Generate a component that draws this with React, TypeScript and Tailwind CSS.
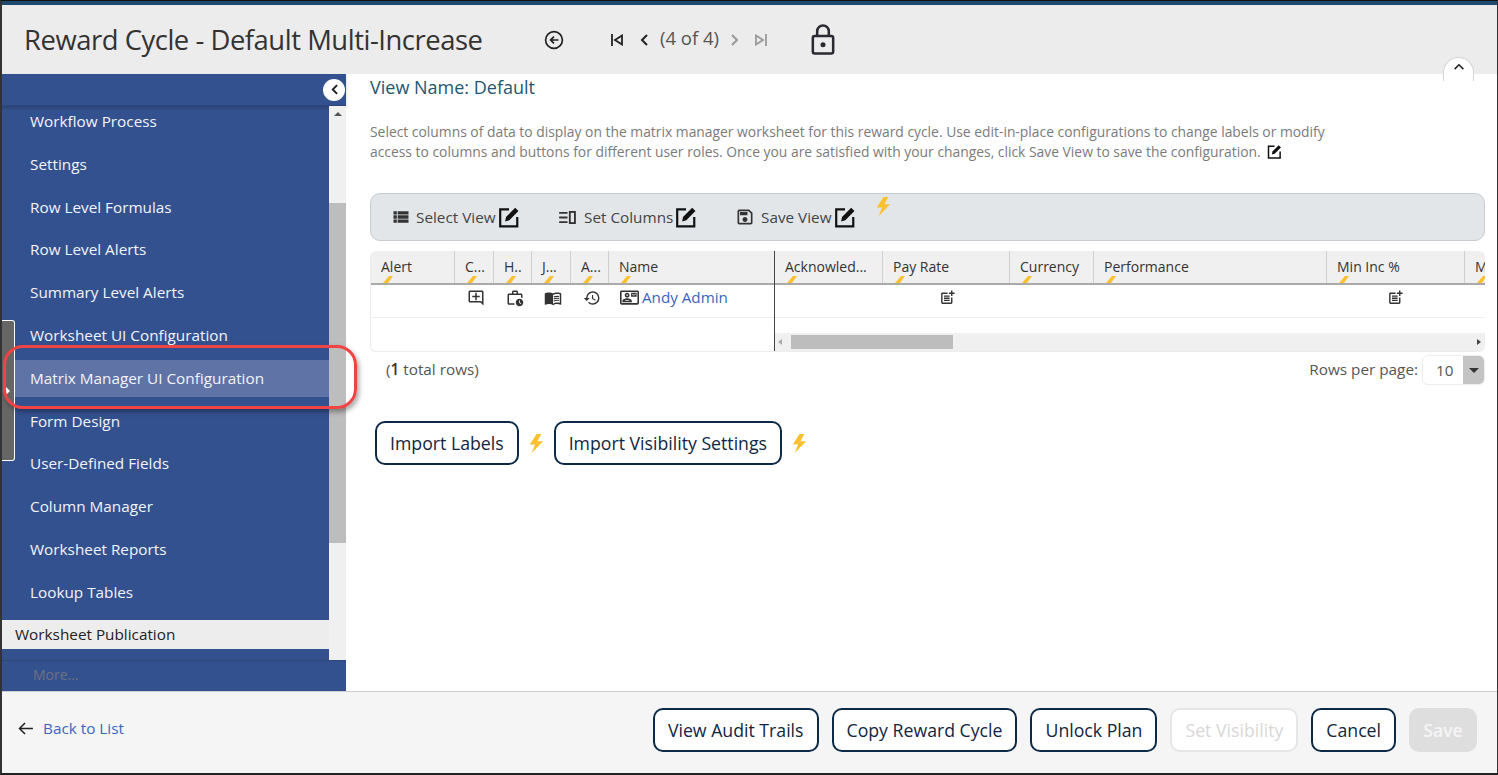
import {
  MdHistory,
  MdMenuBook,
  MdOutlineAddComment,
  MdOutlineContactMail,
  MdOutlinePostAdd,
  MdOutlineSave,
  MdOutlineWorkHistory,
  MdViewList,
} from 'react-icons/md';

const navItems = [
  'Workflow Process',
  'Settings',
  'Row Level Formulas',
  'Row Level Alerts',
  'Summary Level Alerts',
  'Worksheet UI Configuration',
  'Matrix Manager UI Configuration',
  'Form Design',
  'User-Defined Fields',
  'Column Manager',
  'Worksheet Reports',
  'Lookup Tables',
];

const Bolt = ({ className = '' }: { className?: string }) => (
  <svg viewBox="0 0 16 20" className={className}>
    <polygon points="8,0 1,11 6.5,11 3,20 15,7.5 9,7.5 13,0" fill="#fbc02d" />
  </svg>
);

const EditIcon = ({ className = '' }: { className?: string }) => (
  <svg viewBox="0 0 20 20" className={className} fill="none">
    <path d="M10 3H2v15.5h15.5V10" stroke="#111" strokeWidth="2" />
    <path d="M6.5 14l.8-4L15.6 1.6l3 3L10.3 13z" fill="#111" />
  </svg>
);

const ColumnsIcon = () => (
  <svg viewBox="0 0 18 14" className="ml-[1px] h-[13px] w-[17px]" fill="none" stroke="#333">
    <path d="M0 2h9M0 7h9M0 12h9" strokeWidth="2" />
    <rect x="11.5" y="1" width="5.5" height="12" strokeWidth="2" />
  </svg>
);

const HeaderCell = ({ label, width }: { label: string; width: string }) => (
  <div className={`relative flex h-full shrink-0 items-center border-r border-[#cfcfcf] pb-[1px] pl-[10px] ${width}`}>
    <span className="whitespace-nowrap">{label}</span>
    <svg viewBox="0 0 10 7" className="absolute bottom-0 left-[12px] h-[7px] w-[10px]">
      <polygon points="6,0 10,0 5,7 0,7" fill="#fbc02d" />
    </svg>
  </div>
);

const ToolbarItem = ({ icon, label, width = '', iconCol = 'w-[25px]' }: { icon: React.ReactNode; label: string; width?: string; iconCol?: string }) => (
  <div className={`flex items-center ${width}`}>
    <span className={`flex shrink-0 items-center ${iconCol}`}>{icon}</span>
    <span className="text-[15.3px] text-[#444]">{label}</span>
    <EditIcon className="ml-[2px] h-[22px] w-[22px]" />
  </div>
);

const OutlineButton = ({ label, disabled = false }: { label: string; disabled?: boolean }) => (
  <div
    className={`flex h-[44px] items-center justify-center rounded-[10px] border-2 bg-white px-[13px] text-[17.7px] font-medium whitespace-nowrap ${
      disabled ? 'border-[#e6e6e6] text-[#d8d8d8]' : 'border-[#0c2a48] text-[#10263f]'
    }`}
  >
    {label}
  </div>
);

export default function App() {
  return (
    <div
      className="relative flex h-[775px] w-[1498px] flex-col overflow-hidden border-t border-r border-b-2 border-l-2 border-t-[#111] border-r-[#333] border-b-[#222] border-l-[#333] bg-white font-['Open_Sans',sans-serif]"
    >
      <div className="h-[4px] shrink-0 bg-[#1f4a70]" />

      {/* header */}
      <header className="flex h-[69px] shrink-0 items-center bg-[#ececec] pl-[22px]">
        <h1 className="w-[520px] shrink-0 text-[27.4px] leading-none font-medium tracking-[-0.45px] text-[#333]">Reward Cycle - Default Multi-Increase</h1>
        <svg viewBox="0 0 20 20" className="h-[20px] w-[20px]" fill="none" stroke="#222" strokeWidth="1.7">
          <circle cx="10" cy="10" r="8.4" />
          <path d="M14.5 10H7M10 6.6L6.6 10l3.4 3.4" />
        </svg>
        <div className="ml-[47px] flex items-center">
          <svg viewBox="0 0 12 12" className="h-[12px] w-[12px]" fill="none" stroke="#222" strokeWidth="1.8">
            <path d="M1 0v12" />
            <path d="M11 1.5L4 6l7 4.5z" />
          </svg>
          <svg viewBox="0 0 8 12" className="ml-[17px] h-[12px] w-[8px]" fill="none" stroke="#222" strokeWidth="2">
            <path d="M7 1L2 6l5 5" />
          </svg>
          <span className="mb-[4px] ml-[12px] text-[18.5px] text-[#555]">(4 of 4)</span>
          <svg viewBox="0 0 8 12" className="ml-[12px] h-[12px] w-[8px]" fill="none" stroke="#999" strokeWidth="2">
            <path d="M1 1l5 5-5 5" />
          </svg>
          <svg viewBox="0 0 12 12" className="ml-[16px] h-[12px] w-[12px]" fill="none" stroke="#999" strokeWidth="1.8">
            <path d="M11 0v12" />
            <path d="M1 1.5L8 6l-7 4.5z" />
          </svg>
        </div>
        <svg viewBox="0 0 24 32" className="ml-[44px] h-[31px] w-[24px]" fill="none" stroke="#2a2a33" strokeWidth="2.6">
          <path d="M6 13V7.5a6 6 0 0 1 12 0V13" />
          <rect x="1.5" y="12.5" width="21" height="18" rx="2" />
          <circle cx="12" cy="21.5" r="2.6" fill="#2a2a33" stroke="none" />
        </svg>
      </header>

      <div className="flex min-h-0 flex-1">
        {/* sidebar */}
        <aside className="flex w-[344px] shrink-0 flex-col bg-[#34518f]">
          <div className="flex h-[32px] shrink-0 items-center justify-end border-b border-[#2d4679] pr-[1px] shadow-[0_2px_3px_rgba(0,0,0,0.2)]">
            <div className="flex h-[22px] w-[22px] items-center justify-center rounded-full bg-white">
              <svg viewBox="0 0 8 12" className="h-[11px] w-[7px]" fill="none" stroke="#222" strokeWidth="2.2">
                <path d="M7 1L2 6l5 5" />
              </svg>
            </div>
          </div>
          <div className="flex min-h-0 flex-1">
            <nav className="min-w-0 flex-1 overflow-hidden">
              <div className="-mt-[6px]">
                {navItems.map((item) => (
                  <div key={item} className="flex h-[42.8px] items-center">
                    <div
                      className={`flex h-[37px] w-full items-center pl-[28px] text-[15.3px] text-[#f2f4f8] ${
                        item === 'Matrix Manager UI Configuration' ? 'bg-[#5f73a6]' : ''
                      }`}
                    >
                      {item}
                    </div>
                  </div>
                ))}
              </div>
              <div className="mt-[6px] flex h-[29px] items-center bg-[#ededed] pl-[13px] text-[15.3px] font-medium text-[#222]">
                Worksheet Publication
              </div>
            </nav>
            <div className="w-[17px] shrink-0 bg-[#f0f0f0]">
              <div className="mx-auto mt-[6px] h-0 w-0 border-x-[4px] border-b-[4px] border-x-transparent border-b-[#555]" />
              <div className="mt-[87px] h-[340px] w-full bg-[#bdbdbd]" />
            </div>
          </div>
          <div className="flex h-[31px] shrink-0 items-center border-t border-[#2d4679] pb-[3px] pl-[31px] text-[14px] text-[#6d7280]">
            More...
          </div>
        </aside>

        {/* main */}
        <main className="min-w-0 flex-1 pr-[12px] pl-[24px]">
          <h2 className="text-[18px] leading-[26px] font-medium text-[#24566f]">View Name: Default</h2>
          <div className="mt-[22px] text-[13.87px] leading-[20px] text-[#7b7b7b]">
            <p>
              Select columns of data to display on the matrix manager worksheet for this reward cycle. Use edit-in-place configurations to change labels or modify
              <br />
              access to columns and buttons for different user roles. Once you are satisfied with your changes, click Save View to save the configuration.
              <EditIcon className="ml-[6px] inline-block h-[15px] w-[15px] align-[-2px]" />
            </p>
          </div>

          {/* toolbar */}
          <div className="mt-[31px] flex h-[48px] items-center rounded-[10px] border border-[#c8cbcf] bg-[#e3e6e9] pl-[20px]">
            <ToolbarItem icon={<MdViewList className="h-[20px] w-[20px] text-[#333]" />} label="Select View" width="w-[167px]" />
            <ToolbarItem icon={<ColumnsIcon />} label="Set Columns" width="w-[177px]" iconCol="w-[26px]" />
            <ToolbarItem icon={<MdOutlineSave className="h-[20px] w-[20px] text-[#333]" />} label="Save View" iconCol="w-[26px]" />
            <Bolt className="mb-[22px] ml-[19px] h-[19px] w-[17px]" />
          </div>

          {/* grid */}
          <div className="mt-[10px] flex h-[101px] overflow-hidden rounded-[6px] border-b border-l border-[#ececec] text-[14px] text-[#333]">
            <div className="w-[404px] shrink-0 border-r border-[#444]">
              <div className="flex h-[34px] border-b-2 border-[#aaa] bg-[#f0f0f0]">
                <HeaderCell label="Alert" width="w-[84px]" />
                <HeaderCell label="C..." width="w-[39px]" />
                <HeaderCell label="H.." width="w-[38px]" />
                <HeaderCell label="J..." width="w-[39px]" />
                <HeaderCell label="A..." width="w-[38px]" />
                <HeaderCell label="Name" width="flex-1 border-r-0" />
              </div>
              <div className="flex h-[33px] items-center border-b border-[#eee] pb-[7px] text-[#333]">
                <div className="w-[84px]" />
                <div className="flex w-[39px] justify-center pl-[3px]"><MdOutlineAddComment className="h-[18px] w-[18px]" /></div>
                <div className="flex w-[38px] justify-center pl-[4px]"><MdOutlineWorkHistory className="h-[18px] w-[18px]" /></div>
                <div className="flex w-[39px] justify-center pl-[3px]"><MdMenuBook className="h-[18px] w-[18px]" /></div>
                <div className="flex w-[38px] justify-center pl-[3px]"><MdHistory className="h-[18px] w-[18px]" /></div>
                <div className="flex flex-1 items-center pl-[11px]">
                  <MdOutlineContactMail className="mr-[3px] h-[19px] w-[19px]" />
                  <span className="text-[15.2px] text-[#3a66bd]">Andy Admin</span>
                </div>
              </div>
            </div>
            <div className="flex min-w-0 flex-1 flex-col overflow-hidden">
              <div className="flex h-[34px] shrink-0 border-b-2 border-[#aaa] bg-[#f0f0f0]">
                <HeaderCell label="Acknowled..." width="w-[108px]" />
                <HeaderCell label="Pay Rate" width="w-[127px]" />
                <HeaderCell label="Currency" width="w-[84px]" />
                <HeaderCell label="Performance" width="w-[233px]" />
                <HeaderCell label="Min Inc %" width="w-[138px]" />
                <HeaderCell label="M" width="w-[120px] border-r-0" />
              </div>
              <div className="flex h-[33px] shrink-0 items-center border-b border-[#eee] pb-[7px] text-[#333]">
                <MdOutlinePostAdd className="ml-[164px] h-[17px] w-[17px]" />
                <MdOutlinePostAdd className="ml-[431px] h-[17px] w-[17px]" />
              </div>
              <div className="flex-1" />
              <div className="flex h-[18px] shrink-0 items-center bg-[#f0f0f0]">
                <div className="ml-[3px] h-0 w-0 border-y-[3.5px] border-r-[4px] border-y-transparent border-r-[#aaa]" />
                <div className="ml-[9px] h-[14px] w-[162px] bg-[#bdbdbd]" />
                <div className="mr-[4px] ml-auto h-0 w-0 border-y-[3.5px] border-l-[4px] border-y-transparent border-l-[#444]" />
              </div>
            </div>
          </div>

          {/* pager */}
          <div className="mt-[3px] flex h-[30px] items-center justify-between text-[15.3px] text-[#555]">
            <span className="pb-[2px] pl-[16px]">
              (<b className="font-semibold text-[#333]">1</b> total rows)
            </span>
            <div className="flex items-center">
              <span className="mr-[4px] pb-[2px]">Rows per page:</span>
              <div className="flex h-[30px] w-[63px] overflow-hidden rounded-[6px] border border-[#eee] bg-white">
                <span className="flex-1 pt-[3px] pl-[13px] text-[15.2px]">10</span>
                <div className="flex w-[21px] items-center justify-center bg-[#c4c4c4]">
                  <div className="h-0 w-0 border-x-[5px] border-t-[5px] border-x-transparent border-t-[#333]" />
                </div>
              </div>
            </div>
          </div>

          {/* imports */}
          <div className="mt-[36px] flex items-center pl-[5px]">
            <OutlineButton label="Import Labels" />
            <Bolt className="mx-[9px] h-[19px] w-[17px]" />
            <OutlineButton label="Import Visibility Settings" />
            <Bolt className="ml-[9px] h-[19px] w-[17px]" />
          </div>
        </main>
      </div>

      {/* footer */}
      <footer className="flex h-[82px] shrink-0 items-center border-t border-[#ccc] bg-[#f5f5f5] pr-[20px] pl-[16px]">
        <div className="mb-[8px] flex items-center">
          <svg viewBox="0 0 16 14" className="h-[13px] w-[15px]" fill="none" stroke="#222" strokeWidth="1.6">
            <path d="M16 7H1.5M7.5 1L1.5 7l6 6" />
          </svg>
          <span className="ml-[10px] text-[15.3px] text-[#3a66bd]">Back to List</span>
        </div>
        <div className="mb-[5px] ml-auto flex items-center gap-[13px]">
          <OutlineButton label="View Audit Trails" />
          <OutlineButton label="Copy Reward Cycle" />
          <OutlineButton label="Unlock Plan" />
          <OutlineButton label="Set Visibility" disabled />
          <OutlineButton label="Cancel" />
          <div className="flex h-[44px] w-[68px] items-center justify-center rounded-[10px] bg-[#dedede] text-[17.6px] font-semibold text-[#f5f5f5]">
            Save
          </div>
        </div>
      </footer>

      {/* overlays */}
      <div className="absolute top-[319px] left-0 flex h-[141px] w-[13px] items-center justify-start rounded-r-[3px] border border-l-0 border-white bg-[#666]">
        <div className="ml-[4px] h-0 w-0 border-y-[4px] border-l-[4px] border-y-transparent border-l-white" />
      </div>
      <div className="absolute top-[344px] left-[1px] h-[64px] w-[354px] rounded-[20px] border-[3px] border-[#f04444] shadow-[2px_3px_5px_rgba(0,0,0,0.35)]" />
      <div className="absolute top-[56px] left-[1441px] flex h-[24px] w-[31px] items-start justify-center rounded-t-full border border-b-0 border-[#d5d5d5] bg-white pt-[5px]">
        <svg viewBox="0 0 12 8" className="h-[7px] w-[12px]" fill="none" stroke="#222" strokeWidth="1.8">
          <path d="M1 7l5-5 5 5" />
        </svg>
      </div>
    </div>
  );
}
